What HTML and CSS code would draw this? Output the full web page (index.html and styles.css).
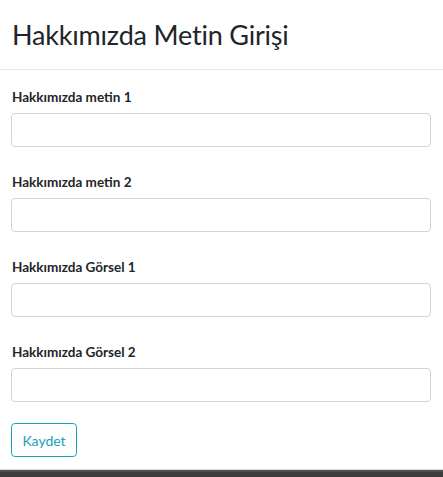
FILE: index.html
```html
<!DOCTYPE html>
<html lang="tr">
<head>
<meta charset="utf-8">
<title>Hakkımızda Metin Girişi</title>
<link rel="stylesheet" href="styles.css">
</head>
<body>
<div class="card">
  <div class="card-header">
    <h3 class="card-title">Hakkımızda Metin Girişi</h3>
  </div>
  <form class="card-body">
    <div class="form-group">
      <label class="form-label">Hakkımızda metin 1</label>
      <input class="form-control" type="text">
    </div>
    <div class="form-group">
      <label class="form-label">Hakkımızda metin 2</label>
      <input class="form-control" type="text">
    </div>
    <div class="form-group">
      <label class="form-label">Hakkımızda Görsel 1</label>
      <input class="form-control" type="text">
    </div>
    <div class="form-group">
      <label class="form-label">Hakkımızda Görsel 2</label>
      <input class="form-control" type="text">
    </div>
    <button class="btn-outline-info" type="button">Kaydet</button>
  </form>
</div>
<div class="page-bottom"></div>
</body>
</html>
```
FILE: styles.css
```css
html, body {
  margin: 0;
  padding: 0;
}
body {
  background: #3f3f3f;
  font-family: "Lato", "Liberation Sans", sans-serif;
  color: #212529;
  height: 477px;
  overflow: hidden;
}
.card {
  background: #fff;
  height: 470px;
  box-sizing: border-box;
  border-bottom: 1px solid #d6d6d6;
}
.card-header {
  height: 69px;
  border-bottom: 1px solid #e6e8ea;
  box-sizing: content-box;
  display: flex;
  align-items: center;
  padding: 0 12px;
}
.card-title {
  margin: 0;
  font-size: 27px;
  font-weight: 400;
  line-height: 1.2;
  letter-spacing: -0.2px;
  color: #212529;
  padding-top: 1px;
}
.card-body {
  display: flex;
  flex-direction: column;
  align-items: flex-start;
  padding: 19px 12px 0 11px;
  margin: 0;
}
.form-group {
  align-self: stretch;
  display: flex;
  flex-direction: column;
  margin-bottom: 27px;
}
.form-group:last-of-type {
  margin-bottom: 21px;
}
.form-label {
  font-size: 13.5px;
  font-weight: 700;
  line-height: 17px;
  margin: 0 0 7px 1px;
  color: #212529;
}
.form-control {
  height: 34px;
  box-sizing: border-box;
  border: 1px solid #ced4da;
  border-radius: 4px;
  background: #fff;
  margin: 0;
  padding: 6px 12px;
  font: inherit;
  font-size: 14px;
}
.btn-outline-info {
  height: 34px;
  width: 66px;
  box-sizing: border-box;
  border: 1px solid #17a2b8;
  border-radius: 4px;
  background: #fff;
  color: #17a2b8;
  font-family: inherit;
  font-size: 14px;
  padding: 0;
  margin: 0;
}
.page-bottom {
  height: 7px;
  background: linear-gradient(#5a5a5a, #3c3c3c 40%, #3a3a3a);
}
```
